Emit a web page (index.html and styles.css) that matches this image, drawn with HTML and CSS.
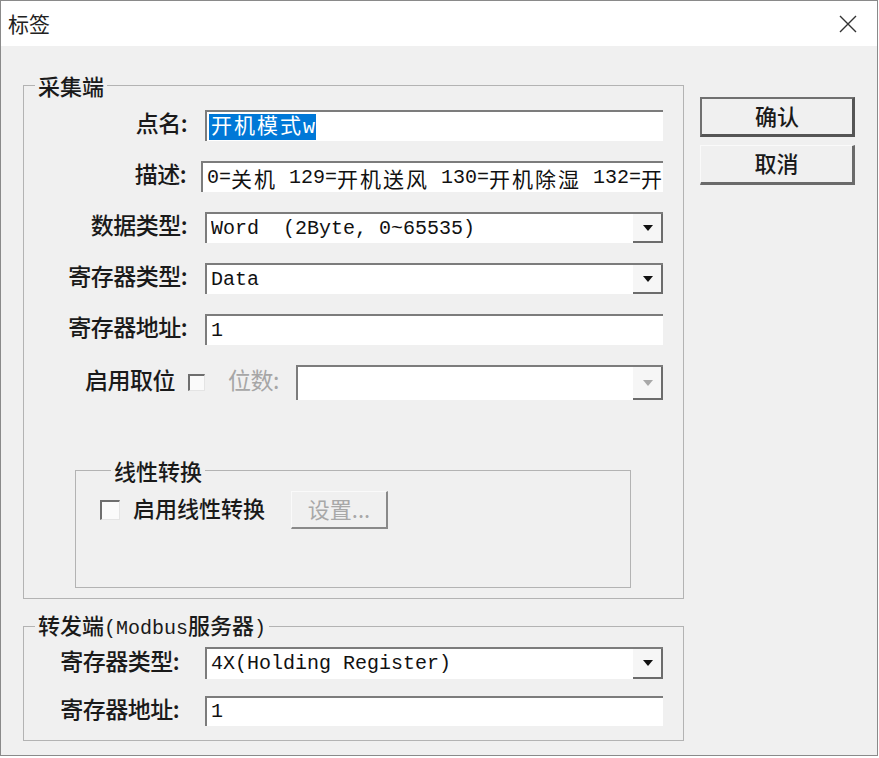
FILE: index.html
```html
<!DOCTYPE html>
<html lang="zh-CN">
<head>
<meta charset="utf-8">
<title>标签</title>
<link rel="stylesheet" href="styles.css">
</head>
<body>
<div class="window">
  <div class="titlebar">
    <span class="title">标签</span>
    <svg class="close" width="20" height="20" viewBox="0 0 20 20"><path d="M2 2 L18 18 M18 2 L2 18" stroke="#333" stroke-width="1.4" fill="none"/></svg>
  </div>
  <div class="content">
    <div class="main">
      <fieldset class="group g1">
        <legend>采集端</legend>
        <div class="rows">
          <div class="row">
            <span class="lbl">点名:</span>
            <div class="field"><span class="sel"><span class="cj">开机模式</span>w</span></div>
          </div>
          <div class="row desc">
            <span class="lbl">描述:</span>
            <div class="field">0=<span class="cj">关机</span> 129=<span class="cj">开机送风</span> 130=<span class="cj">开机除湿</span> 132=<span class="cj">开</span></div>
          </div>
          <div class="row">
            <span class="lbl">数据类型:</span>
            <div class="field select"><span class="val">Word  (2Byte, 0~65535)</span><span class="dd"><i class="arrow"></i></span></div>
          </div>
          <div class="row">
            <span class="lbl">寄存器类型:</span>
            <div class="field select"><span class="val">Data</span><span class="dd"><i class="arrow"></i></span></div>
          </div>
          <div class="row">
            <span class="lbl">寄存器地址:</span>
            <div class="field">1</div>
          </div>
          <div class="row bitrow">
            <span class="lbl short">启用取位</span>
            <span class="check"></span>
            <span class="dim">位数:</span>
            <div class="field select bits"><span class="val"></span><span class="dd"><i class="arrow off"></i></span></div>
          </div>
        </div>
        <fieldset class="group linear">
          <legend>线性转换</legend>
          <div class="lrow">
            <span class="check big"></span>
            <span class="ltext">启用线性转换</span>
            <span class="btn disabled">设置...</span>
          </div>
        </fieldset>
      </fieldset>
      <fieldset class="group g2">
        <legend>转发端<span class="mono">(Modbus</span>服务器<span class="mono">)</span></legend>
        <div class="rows2">
          <div class="row r1">
            <span class="lbl">寄存器类型:</span>
            <div class="field select"><span class="val">4X(Holding Register)</span><span class="dd"><i class="arrow"></i></span></div>
          </div>
          <div class="row r2">
            <span class="lbl">寄存器地址:</span>
            <div class="field">1</div>
          </div>
        </div>
      </fieldset>
    </div>
    <div class="buttons">
      <span class="btn default">确认</span>
      <span class="btn">取消</span>
    </div>
  </div>
</div>
</body>
</html>
```

FILE: styles.css
```css
html, body {
  margin: 0;
  padding: 0;
  background: #ffffff;
}
body {
  font-family: "Noto Sans CJK SC", "Noto Sans", sans-serif;
  color: #1a1a1a;
}
.window {
  width: 876px;
  height: 754px;
  border: 1px solid #8a8a8a;
  background: #f0f0f0;
  display: flex;
  flex-direction: column;
}
.titlebar {
  height: 45px;
  flex: none;
  background: #ffffff;
  display: flex;
  align-items: center;
  justify-content: space-between;
  padding: 0 19px 0 7px;
}
.title {
  font-size: 21px;
  line-height: 22px;
  color: #222;
  padding-bottom: 2px;
}
.close {
  display: block;
}
.content {
  display: flex;
  align-items: flex-start;
  padding: 28px 0 0 22px;
}
.main {
  width: 661px;
  flex: none;
}
fieldset.group {
  margin: 0;
  padding: 0;
  border: 1px solid #b3b3b3;
  min-width: 0;
  box-sizing: border-box;
}
legend {
  font-size: 22px;
  line-height: 22px;
  padding: 0 3px;
  margin-left: 11px;
  font-weight: 500;
  color: #1a1a1a;
}
.mono {
  font-family: "Liberation Mono", monospace;
  font-size: 20px;
  font-weight: 400;
}
fieldset.g1 {
  padding-bottom: 10px;
}
.rows {
  display: flex;
  flex-direction: column;
  gap: 20px;
  padding: 14px 20px 0 0;
}
.row {
  display: flex;
  align-items: center;
  height: 31px;
}
.lbl {
  width: 163px;
  flex: none;
  text-align: right;
  font-size: 23px;
  letter-spacing: -0.5px;
  font-weight: 500;
  margin-right: 18px;
  padding-bottom: 7px;
  white-space: nowrap;
}
.row.desc .lbl {
  width: 162px;
  margin-right: 15px;
}
.row.desc .field {
  width: 462px;
}
.field {
  width: 458px;
  height: 100%;
  box-sizing: border-box;
  flex: none;
  background: #ffffff;
  border-top: 2px solid #7c7c7c;
  border-left: 2px solid #7c7c7c;
  display: flex;
  align-items: center;
  padding-left: 4px;
  overflow: hidden;
  white-space: pre;
  font-family: "Liberation Mono", monospace;
  font-size: 20px;
  line-height: 24px;
  color: #111;
}
.cj {
  font-family: "Noto Sans CJK SC", sans-serif;
  font-size: 21px;
  line-height: 20px;
  letter-spacing: 2px;
}
.sel {
  background: #0078d7;
  color: #ffffff;
  line-height: 24px;
  padding-right: 1px;
  margin-left: -2px;
  padding-left: 2px;
}
.select {
  padding-right: 0;
}
.select .val {
  flex: 1;
  overflow: hidden;
}
.dd {
  flex: none;
  width: 30px;
  height: 100%;
  box-sizing: border-box;
  background: #f6f6f6;
  border-right: 2px solid #6c6c6c;
  border-bottom: 2px solid #6c6c6c;
  display: flex;
  align-items: center;
  justify-content: center;
}
.arrow {
  display: block;
  width: 0;
  height: 0;
  border-left: 5px solid transparent;
  border-right: 5px solid transparent;
  border-top: 6px solid #111;
  margin-left: 1px;
}
.arrow.off {
  border-top-color: #a8a8a8;
}
.bitrow {
  height: 35px;
}
.lbl.short {
  width: 151px;
  margin-right: 13px;
}
.check {
  display: block;
  width: 17px;
  height: 17px;
  box-sizing: border-box;
  flex: none;
  background: #fafafa;
  border-top: 2px solid #6e6e6e;
  border-left: 2px solid #6e6e6e;
  border-right: 1px solid #e4e4e4;
  border-bottom: 1px solid #e4e4e4;
}
.check.big {
  width: 20px;
  height: 20px;
}
.dim {
  margin-left: 23px;
  font-size: 23px;
  letter-spacing: -0.5px;
  padding-bottom: 7px;
  color: #a6a6a6;
  width: 68px;
  flex: none;
}
.field.bits {
  width: 367px;
  margin-left: auto;
}
fieldset.linear {
  margin: 59px 0 0 51px;
  width: 556px;
  padding: 0 0 58px 24px;
}
.lrow {
  display: flex;
  align-items: center;
  height: 38px;
  margin-top: 10px;
}
.ltext {
  margin-left: 13px;
  font-size: 22px;
  font-weight: 500;
  padding-bottom: 6px;
}
.btn {
  display: flex;
  align-items: center;
  justify-content: center;
  box-sizing: border-box;
  font-size: 22px;
  font-weight: 500;
  letter-spacing: 0;
  padding-bottom: 4px;
  color: #1a1a1a;
  background: #f0f0f0;
  border-top: 1px solid #fafafa;
  border-left: 1px solid #fafafa;
  border-right: 3px solid #6a6a6a;
  border-bottom: 3px solid #6a6a6a;
}
.btn.disabled {
  margin-left: 26px;
  width: 97px;
  height: 38px;
  font-weight: 400;
  color: #a8a8a8;
  border-right: 2px solid #8a8a8a;
  border-bottom: 2px solid #8a8a8a;
}
fieldset.g2 {
  margin-top: 14px;
  padding-bottom: 14px;
}
.rows2 {
  display: flex;
  flex-direction: column;
  gap: 17px;
  padding: 7px 20px 0 0;
}
.g2 .lbl {
  width: 155px;
  margin-right: 26px;
}
.row.r1 {
  height: 32px;
}
.row.r2 {
  height: 30px;
}
.buttons {
  margin-left: 16px;
  padding-top: 23px;
  display: flex;
  flex-direction: column;
  gap: 8px;
}
.buttons .btn {
  width: 155px;
  height: 40px;
}
.btn.default {
  border: 2px solid #707070;
  border-right: 3px solid #555;
  border-bottom: 3px solid #555;
}
```
